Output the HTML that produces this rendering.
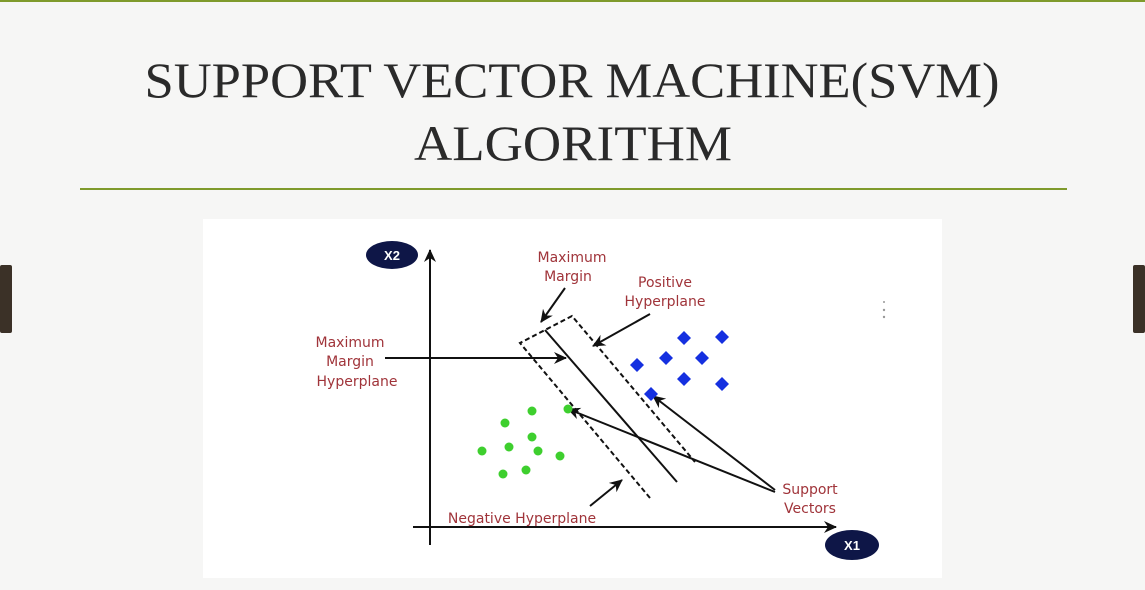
<!DOCTYPE html>
<html><head><meta charset="utf-8"><style>
html,body{margin:0;padding:0;width:1145px;height:590px;overflow:hidden;background:#f6f6f5;}
svg{display:block}
</style></head><body>
<svg width="1145" height="590" viewBox="0 0 1145 590" xmlns="http://www.w3.org/2000/svg">
<defs>
<marker id="ah" markerWidth="14" markerHeight="14" refX="12" refY="6" orient="auto" markerUnits="userSpaceOnUse"><path d="M0,0 L13,6 L0,12 L4,6 Z" fill="#111"/></marker>
</defs>
<rect x="0" y="0" width="1145" height="2" fill="#7f9a2c"/>
<text x="572" y="97" font-family="Liberation Serif, serif" font-size="50" fill="#2a2a2a" text-anchor="middle" textLength="855" lengthAdjust="spacingAndGlyphs">SUPPORT VECTOR MACHINE(SVM)</text>
<text x="573" y="160" font-family="Liberation Serif, serif" font-size="50" fill="#2a2a2a" text-anchor="middle" textLength="318" lengthAdjust="spacingAndGlyphs">ALGORITHM</text>
<rect x="80" y="188" width="987" height="2" fill="#7f9a2c"/>
<rect x="0" y="265" width="12" height="68" rx="2" fill="#3b3127"/>
<rect x="1133" y="265" width="12" height="68" rx="2" fill="#3b3127"/>
<rect x="203" y="219" width="739" height="359" fill="#fff"/>
<g stroke="#111" stroke-width="2" fill="none">
<line x1="430" y1="545" x2="430" y2="250" marker-end="url(#ah)"/>
<line x1="413" y1="527" x2="836" y2="527" marker-end="url(#ah)"/>
<line x1="385" y1="358" x2="566" y2="358" marker-end="url(#ah)"/>
<line x1="545" y1="330" x2="677" y2="482"/>
<line x1="565" y1="288" x2="541" y2="322" marker-end="url(#ah)"/>
<line x1="650" y1="314" x2="593" y2="346" marker-end="url(#ah)"/>
<line x1="590" y1="506" x2="622" y2="480" marker-end="url(#ah)"/>
<line x1="775" y1="492" x2="568" y2="409" marker-end="url(#ah)"/>
<line x1="775" y1="490" x2="653" y2="396" marker-end="url(#ah)"/>
</g>
<g stroke="#111" stroke-width="2" fill="none" stroke-dasharray="5,3">
<polyline points="650,498 520,343 572,316 695,462"/>
</g>
<ellipse cx="392" cy="255" rx="26" ry="14" fill="#0e1647"/>
<text x="392" y="260" font-family="Liberation Sans, sans-serif" font-size="13" font-weight="bold" fill="#fff" text-anchor="middle">X2</text>
<ellipse cx="852" cy="545" rx="27" ry="15" fill="#0e1647"/>
<text x="852" y="550" font-family="Liberation Sans, sans-serif" font-size="13" font-weight="bold" fill="#fff" text-anchor="middle">X1</text>
<g font-family="DejaVu Sans, sans-serif" font-size="14" fill="#a0343a" text-anchor="middle">
<text x="350" y="347">Maximum</text>
<text x="350" y="366">Margin</text>
<text x="357" y="386">Hyperplane</text>
<text x="572" y="262">Maximum</text>
<text x="568" y="281">Margin</text>
<text x="665" y="287">Positive</text>
<text x="665" y="306">Hyperplane</text>
<text x="810" y="494">Support</text>
<text x="810" y="513">Vectors</text>
<text x="522" y="523">Negative Hyperplane</text>
</g>
<g fill="#3ecf2e">
<circle cx="532" cy="411" r="4.5"/><circle cx="568" cy="409" r="4.5"/><circle cx="505" cy="423" r="4.5"/>
<circle cx="532" cy="437" r="4.5"/><circle cx="509" cy="447" r="4.5"/><circle cx="538" cy="451" r="4.5"/>
<circle cx="482" cy="451" r="4.5"/><circle cx="560" cy="456" r="4.5"/><circle cx="503" cy="474" r="4.5"/>
<circle cx="526" cy="470" r="4.5"/>
</g>
<g fill="#1530e0">
<path d="M684,331 l7,7 l-7,7 l-7,-7z"/><path d="M722,330 l7,7 l-7,7 l-7,-7z"/>
<path d="M666,351 l7,7 l-7,7 l-7,-7z"/><path d="M702,351 l7,7 l-7,7 l-7,-7z"/>
<path d="M637,358 l7,7 l-7,7 l-7,-7z"/><path d="M684,372 l7,7 l-7,7 l-7,-7z"/>
<path d="M722,377 l7,7 l-7,7 l-7,-7z"/><path d="M651,387 l7,7 l-7,7 l-7,-7z"/>
</g>
<g fill="#999"><circle cx="884" cy="302" r="1"/><circle cx="884" cy="310" r="1.2"/><circle cx="884" cy="317" r="1.2"/></g>
</svg>
</body></html>
